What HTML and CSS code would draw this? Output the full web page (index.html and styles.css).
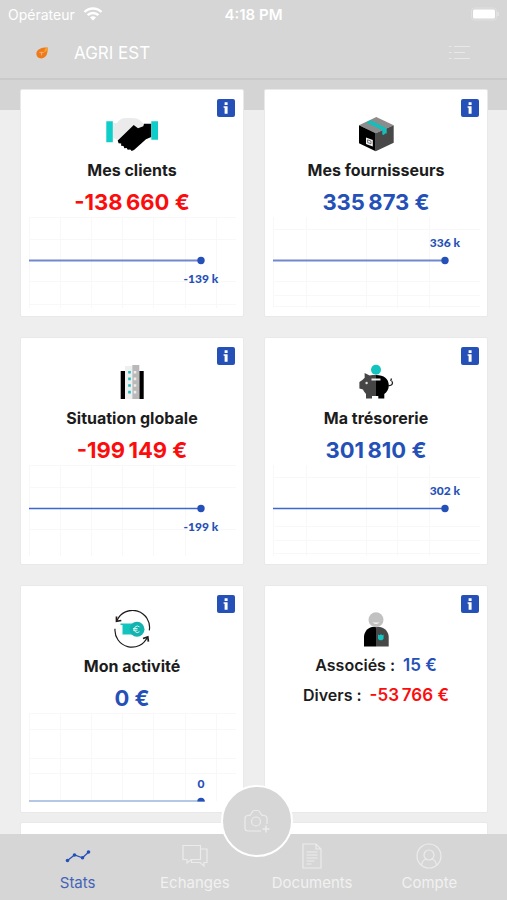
FILE: index.html
```html
<!DOCTYPE html>
<html lang="fr">
<head>
  <meta charset="UTF-8" />
  <meta name="viewport" content="width=device-width, initial-scale=1.0"/>
  <title>AGRI EST</title>
  <link rel="stylesheet" href="styles.css">
</head>
<body>
  <header class="top">
    <div class="status">
      <span class="carrier">Opérateur
        <svg width="20" height="14" viewBox="0 0 20 14" fill="none" stroke="#fff" stroke-width="2.4">
          <path d="M1.5 5a12 12 0 0 1 17 0M4.6 8.2a7.6 7.6 0 0 1 10.8 0"/>
          <path d="M10 13.5 7 10.6a4.2 4.2 0 0 1 6 0z" fill="#fff" stroke="none"/>
        </svg>
      </span>
      <span class="time">4:18 PM</span>
      <span class="battery"><svg width="28" height="14" viewBox="0 0 28 14">
        <rect x="0.5" y="1" width="25" height="12" rx="3" fill="none" stroke="#e0e0e0"/>
        <rect x="2" y="2.5" width="22" height="9" rx="1.5" fill="#fff"/>
        <path d="M27 5v4" stroke="#e4e4e4" stroke-width="1.5"/>
      </svg></span>
    </div>
    <div class="nav">
      <svg class="leaf" width="12" height="12" viewBox="0 0 12 12">
        <path d="M11.6.6C12 6 10.4 11.4 5.4 11.4 2 11.4.2 9 .4 6.2.8 2.4 5.6.4 11.6.6z" fill="#ee7a1c"/>
        <path d="M11.6.6C9 1 8 3 8.4 5.6c1.8-.6 3-2.4 3.2-5z" fill="#f9a51f"/>
        <path d="M3.4 5.4h4.4M5.6 5.4v3" stroke="#f7bd8c" stroke-width=".8"/>
      </svg>
      <h1>AGRI EST</h1>
      <button class="menu" aria-label="Menu">
        <svg width="22" height="16" viewBox="0 0 22 16" stroke="#e8e8e8" stroke-width="1.1">
          <path d="M0 1.500h2.500M5 1.500h16M0 7.500h2.500M5 7.500h11M0 13.500h2.500M5 13.500h16"/>
        </svg>
      </button>
    </div>
  </header>

  <main>
    <div class="cards">
      <section class="card">
        <button class="info" aria-label="Info"><svg width="18" height="18" viewBox="0 0 18 18" fill="#fff"><path d="M7.600 3.300h3v2.700h-3zM6.600 7.300h4v7.500h-3V8.800h-1z"/></svg></button>
        <svg class="icon" width="54" height="38" viewBox="0 0 54 38">
          <path d="M7.8 9H12C15 5 17 4 21 4h7c5 0 8 3 11 5.7L38.3 13 33 15l-4.3-4-16 14.7-4.9-2z" fill="#ebebeb"/>
          <path d="M28.7 11 33 14.2l5.3-2 .7-2.5h7.3V23L41 25.3 29 36l-2.3 1-1.4-1.4-2.6.2-1-1.8-2.4.2-.8-2.2-2.4-.2.1-2.2-2.6-.4-.9-2.6z"/>
          <path d="M1.3 7.3h6.5v21H1.3zM46.3 7.3H53v18.4h-6.7z" fill="#0fcdc8"/>
        </svg>
        <h2>Mes clients</h2>
        <p class="amount negative">-138&#8201;660 €</p>
        <svg class="chart" viewBox="0 0 208 92">
          <path class="grid" d="M1.5 1v91M32.5 1v91M63.5 1v91M94.5 1v91M125.5 1v91M157.5 1v91M188.5 1v91M1 1.5h207M1 23.5h207M1 65.5h207M1 88.5h207"/>
          <path class="line soft" d="M1 44.5h172"/>
          <circle class="dot" cx="173" cy="44.5" r="3.7"/>
          <text x="173" y="67">-139 k</text>
        </svg>
      </section>

      <section class="card">
        <button class="info" aria-label="Info"><svg width="18" height="18" viewBox="0 0 18 18" fill="#fff"><path d="M7.600 3.300h3v2.700h-3zM6.600 7.300h4v7.500h-3V8.800h-1z"/></svg></button>
        <svg class="icon" width="54" height="38" viewBox="0 0 54 38">
          <path d="M27.3 3 44.7 11.3 26.7 19.3 10 11.3z" fill="#8c8c8c"/>
          <path d="M10 11.3l16.7 8v18L10 29.3z"/>
          <path d="M44.7 11.3l-18 8v18l18-8.6z" fill="#484848"/>
          <path d="M17 8.400l4.700-2.200 13.600 6.700 2.400 1.500v5l-1.700.2-1.100 1.500-1.600-.7v-4.200z" fill="#18bcb8"/>
          <path d="M17 23.5l6.8 2.6v6.4L17 30z" fill="#f2f2f2"/>
          <path d="M18.6 25.8l3.4 1.4v2.6l-3.4-1.3z" fill="none" stroke="#555" stroke-width=".8"/>
        </svg>
        <h2>Mes fournisseurs</h2>
        <p class="amount">335&#8201;873 €</p>
        <svg class="chart" viewBox="0 0 208 92">
          <path class="grid" d="M1.5 1v91M34.5 1v91M94.5 1v91M125.5 1v91M157.5 1v91M1 13.5h207M1 65.5h207M1 79.5h207M1 90.5h207"/>
          <path class="line soft" d="M1 44.5h172"/>
          <circle class="dot" cx="173" cy="44.5" r="3.7"/>
          <text x="173" y="31">336 k</text>
        </svg>
      </section>

      <section class="card">
        <button class="info" aria-label="Info"><svg width="18" height="18" viewBox="0 0 18 18" fill="#fff"><path d="M7.600 3.300h3v2.700h-3zM6.600 7.300h4v7.500h-3V8.800h-1z"/></svg></button>
        <svg class="icon" width="54" height="38" viewBox="0 0 54 38">
          <path d="M15.7 9H20v28h-4.3zM34.3 9h4.4v28h-4.4z"/>
          <path d="M20 4h7.3v33H20z" fill="#efefef"/>
          <path d="M27.3 3h7v34h-7z" fill="#b9b9b9"/>
          <path d="M24.5 9v25" stroke="#1cc0bb" stroke-width="2.6" stroke-dasharray="2.6 4"/>
          <path d="M30 9v25" stroke="#f1ece8" stroke-width="2.6" stroke-dasharray="2.6 4"/>
        </svg>
        <h2>Situation globale</h2>
        <p class="amount negative">-199&#8201;149 €</p>
        <svg class="chart" viewBox="0 0 208 92">
          <path class="grid" d="M1.5 1v91M32.5 1v91M63.5 1v91M94.5 1v91M125.5 1v91M157.5 1v91M1 1.5h207M1 23.5h207M1 65.5h207"/>
          <path class="line" d="M1 44.5h172"/>
          <circle class="dot" cx="173" cy="44.5" r="3.7"/>
          <text x="173" y="67">-199 k</text>
        </svg>
      </section>

      <section class="card">
        <button class="info" aria-label="Info"><svg width="18" height="18" viewBox="0 0 18 18" fill="#fff"><path d="M7.600 3.300h3v2.700h-3zM6.600 7.300h4v7.500h-3V8.800h-1z"/></svg></button>
        <svg class="icon" width="54" height="38" viewBox="0 0 54 38">
          <path d="M27 13v21h-4v2.6h-6V32c-1.4-1.4-2.3-2.8-3-4.4l-3.6-1.2V20l3-2 2.3-2.2L15.6 11l5 2.6C22.6 13 24.5 13 27 13z" fill="#454545"/>
          <path d="M27 13c8 0 12.800 4 12.800 10.500 0 4-2 6.500-4.500 8.500v4.600h-6V34H27z"/>
          <path d="M39 23.500c4 .6 5.500-2 3.800-4.500M42.500 16.500l-.8 2.500" fill="none" stroke="#222" stroke-width="1.3"/>
          <circle cx="27" cy="7.700" r="5" fill="#13c3bd"/>
          <path d="M22.500 17.500h9" stroke="#ededed" stroke-width="2"/>
          <circle cx="17.600" cy="21" r="1.200" fill="#ddd"/>
        </svg>
        <h2>Ma trésorerie</h2>
        <p class="amount">301&#8201;810 €</p>
        <svg class="chart" viewBox="0 0 208 92">
          <path class="grid" d="M1.5 1v91M34.5 1v91M94.5 1v91M125.5 1v91M157.5 1v91M1 13.5h207M1 62.5h207M1 76.5h207M1 89.5h207"/>
          <path class="line" d="M1 44.5h172"/>
          <circle class="dot" cx="173" cy="44.5" r="3.7"/>
          <text x="173" y="31">302 k</text>
        </svg>
      </section>

      <section class="card">
        <button class="info" aria-label="Info"><svg width="18" height="18" viewBox="0 0 18 18" fill="#fff"><path d="M7.600 3.300h3v2.700h-3zM6.600 7.300h4v7.500h-3V8.800h-1z"/></svg></button>
        <svg class="icon" width="54" height="38" viewBox="0 0 54 38">
          <path d="M12 10.500A17 17 0 0 1 44.300 20.300M10 18.700A17 17 0 0 0 42.500 27" fill="none" stroke="#1c1c1c" stroke-width="1.200"/>
          <path d="M11.500 6.500v4.800l4.800-.8M38 28.500l4.800-1.600.6 4.700" fill="none" stroke="#1c1c1c" stroke-width="1.700"/>
          <path d="M15.500 13.500H30v11H17.500V15h-2z" fill="#12c4be"/>
          <circle cx="32" cy="19.300" r="7.500" fill="#14b3ae"/>
          <path d="M34.500 16.900a3.200 3.200 0 1 0 0 4.800M28 18.600h4.500M28 20.200h4.500" fill="none" stroke="#d9f6f4" stroke-width="1"/>
        </svg>
        <h2>Mon activité</h2>
        <p class="amount">0 €</p>
        <svg class="chart" viewBox="0 0 208 92">
          <path class="grid" d="M1.5 1v88M32.5 1v88M63.5 1v88M94.5 1v88M125.5 1v88M157.5 1v88M188.5 1v88M1 1.5h207M1 17.5h207M1 46.5h207M1 61.5h207"/>
          <path class="line pale" d="M1 89h176"/>
          <path class="dot" d="M169.300 89.500a3.700 3.700 0 0 1 7.400 0z"/>
          <text x="173" y="76">0</text>
        </svg>
      </section>

      <section class="card">
        <button class="info" aria-label="Info"><svg width="18" height="18" viewBox="0 0 18 18" fill="#fff"><path d="M7.600 3.300h3v2.700h-3zM6.600 7.300h4v7.500h-3V8.800h-1z"/></svg></button>
        <svg class="icon" width="54" height="38" viewBox="0 0 54 38">
          <path d="M27 17v19.500H15V27c0-5 3.500-9 8-10z"/>
          <path d="M27 17h4c5 1 8.700 5 8.700 10v9.500H27z" fill="#474747"/>
          <circle cx="27" cy="9.700" r="7.500" fill="#c1c1c1"/>
          <path d="M23.500 12.500a5 5 0 0 0 7 0z" fill="#f6f6f6"/>
          <path d="M29 24.500l1.500.8 1.500-1 1.400 1 1.200-.8v4.300c-1.600 2-4 2-5.600 0z" fill="#12c4be"/>
        </svg>
        <dl>
          <div class="row"><dt>Associés :</dt><dd>15 €</dd></div>
          <div class="row"><dt>Divers :</dt><dd class="negative">-53&#8201;766 €</dd></div>
        </dl>
      </section>
    </div>
    <section class="card wide"></section>
  </main>

  <nav class="tabs">
    <a class="tab active" href="#">
      <svg width="26" height="26" viewBox="0 0 26 26" fill="#2450b8">
        <path d="M2.500 17.500 9.500 12l8 2.700 6.500-6" fill="none" stroke="#2450b8" stroke-width="1.200"/>
        <circle cx="2.500" cy="17.500" r="1.800"/><circle cx="9.500" cy="12" r="1.800"/><circle cx="17.500" cy="14.700" r="1.800"/><circle cx="23.500" cy="9" r="1.800"/>
      </svg>
      Stats
    </a>
    <a class="tab" href="#">
      <svg width="26" height="26" viewBox="0 0 26 26">
        <path d="M1 2.500h17.500v14H9l-4 3.500v-3.500H1z"/>
        <path d="M18.500 6H25v13.500h-3V23l-4-3.500H9.500v-3"/>
      </svg>
      Echanges
    </a>
    <a class="tab" href="#">
      <svg width="26" height="26" viewBox="0 0 26 26">
        <path d="M4 1h13l5 5v19H4zM17 1v5h5M7.500 9h11M7.500 12h11M7.500 15h11M7.500 18h8M7.500 21h5"/>
      </svg>
      Documents
    </a>
    <a class="tab" href="#">
      <svg width="26" height="26" viewBox="0 0 26 26">
        <circle cx="13" cy="13" r="12"/><circle cx="13" cy="12" r="5"/>
        <path d="M5.500 22c.5-3 2.500-5.500 5-6M20.500 22c-.5-3-2.500-5.500-5-6"/>
      </svg>
      Compte
    </a>
    <button class="scan" aria-label="Photo">
      <svg width="28" height="26" viewBox="0 0 28 26">
        <path d="M18 23H5c-1.700 0-3-1-3-2.700V10.500C2 8.500 3 7.500 5 7.500c2 0 3-.8 3.600-2.300C9.200 3.500 10 2.500 11.500 2.500h3c1.500 0 2.300 1 2.900 2.700.6 1.500 1.600 2.300 3.600 2.300s3 1 3 3V16"/>
        <circle cx="13" cy="13.500" r="4.500"/>
        <path d="M23 17.500v7M19.500 21h7" stroke-width="1.500"/>
      </svg>
    </button>
  </nav>
</body>
</html>
```
FILE: styles.css
```css
* {
  box-sizing: border-box;
}
body {
  margin: 0;
  height: 100vh;
  display: flex;
  flex-direction: column;
  overflow: hidden;
  font-family: Inter, 'Liberation Sans', sans-serif;
  background: #eeeeee;
  color: #1c1c1c;
}
button {
  padding: 0;
  border: none;
  background: none;
  cursor: pointer;
}
svg {
  display: block;
}

/* header */
.top {
  flex: none;
  background: #d6d6d6;
  border-bottom: 2px solid #cacaca;
  color: #fff;
}
.status {
  display: grid;
  grid-template-columns: 1fr auto 1fr;
  align-items: center;
  height: 28px;
  padding: 0 8px;
  font-size: 14px;
}
.carrier {
  display: flex;
  align-items: center;
  gap: 8px;
}
.time {
  font-size: 15px;
  font-weight: 600;
}
.battery {
  justify-self: end;
}
.nav {
  display: flex;
  align-items: center;
  height: 50px;
  padding: 0 36px;
}
.nav h1 {
  flex: 1;
  margin: 0 0 0 26px;
  font-size: 17px;
  font-weight: 400;
}

/* cards */
main {
  flex: 1;
  min-height: 0;
  overflow: hidden;
  padding: 9px 19px 0 20px;
  background: linear-gradient(#d4d4d4 30px, #eeeeee 30px);
}
.cards {
  display: grid;
  grid-template-columns: 1fr 1fr;
  gap: 20px;
}
.card {
  position: relative;
  min-height: 228px;
  padding: 24px 7px 6px;
  background: #fff;
  border: 1px solid #e9e9e9;
  border-radius: 2px;
  text-align: center;
}
.wide {
  margin-top: 9px;
}
.info {
  position: absolute;
  top: 9px;
  right: 8px;
  width: 18px;
  height: 18px;
  border-radius: 2px;
  background: #2450b8;
}
.icon {
  margin: 0 auto;
}
.card h2 {
  margin: 6px 0;
  font-size: 16px;
  line-height: 24px;
  font-weight: 700;
}
.amount {
  margin: 0;
  font-size: 22px;
  line-height: 28px;
  font-weight: 700;
  color: #2450b8;
}
.card .negative {
  color: #fb0d0d;
}

/* charts */
.chart {
  width: 100%;
}
.grid {
  fill: none;
  stroke: #f8f8f8;
}
.line {
  fill: none;
  stroke: #3f66cc;
  stroke-width: 1.5;
}
.soft {
  stroke: #7187cf;
  stroke-width: 2;
}
.pale {
  stroke: #9db4dc;
}
.dot {
  fill: #2450b8;
}
.chart text {
  font-family: Lato, sans-serif;
  font-size: 12px;
  font-weight: 900;
  text-anchor: middle;
  fill: #2450b8;
}

dl {
  margin: 2px 0 0;
}
.row {
  display: flex;
  justify-content: center;
  gap: 8px;
  font-size: 16px;
  line-height: 30px;
  font-weight: 600;
}
dd {
  margin: 0;
  font-size: 17px;
  color: #2450b8;
}

/* bottom bar */
.tabs {
  position: relative;
  flex: none;
  display: flex;
  height: 66px;
  padding: 9px 19px 0;
  background: #d6d6d6;
}
.tab {
  flex: 1;
  display: flex;
  flex-direction: column;
  align-items: center;
  gap: 4px;
  font-size: 15px;
  line-height: 20px;
  color: #f1f1f1;
  text-decoration: none;
}
.tab.active {
  color: #4464b8;
}
.tab:not(.active) svg,
.scan svg {
  fill: none;
  stroke: #ebebeb;
  stroke-width: 1.2;
}
.scan {
  position: absolute;
  top: -49px;
  left: 50%;
  width: 72px;
  height: 72px;
  margin-left: -33px;
  display: flex;
  align-items: center;
  justify-content: center;
  background: #d6d6d6;
  border: 2px solid #fff;
  border-radius: 50%;
}
```
